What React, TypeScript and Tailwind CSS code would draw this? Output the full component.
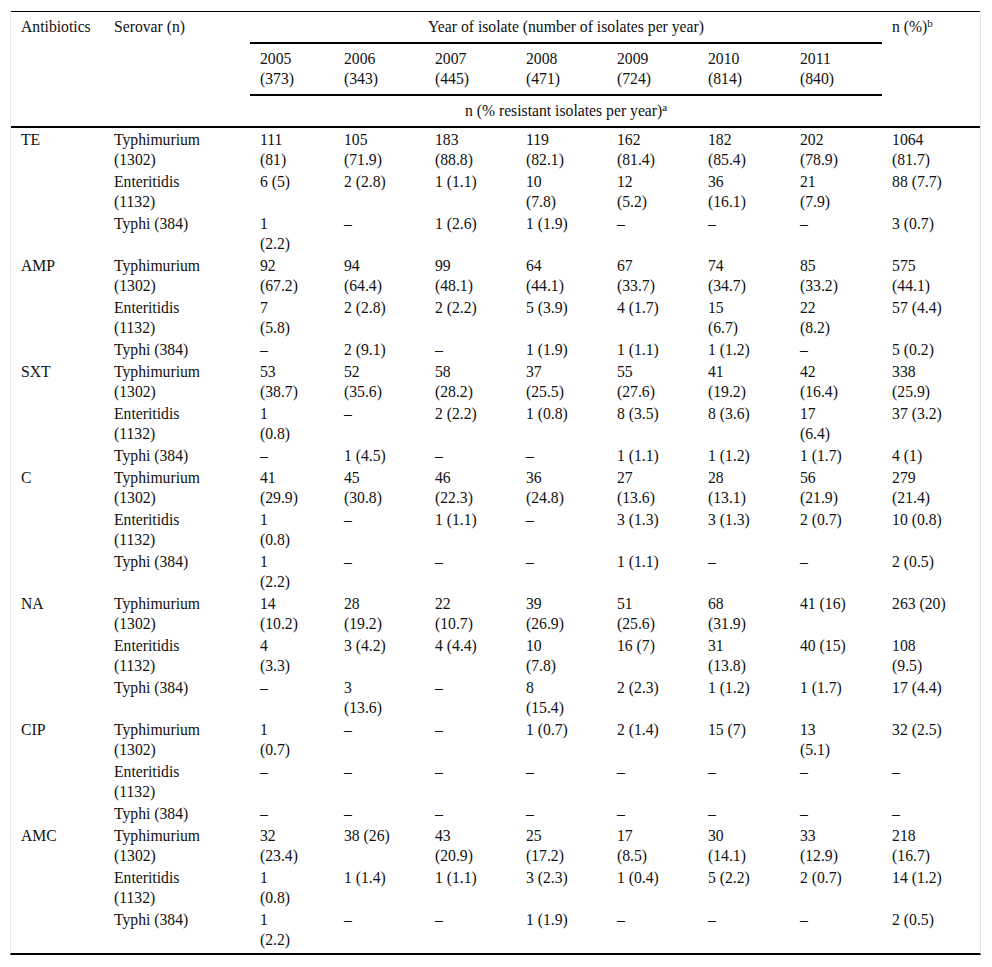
import React from "react";

type Row = { ab?: string; serovar: string; vals: string[] };

const D = "–";

const groups: { ab: string; rows: { serovar: string; vals: string[] }[] }[] = [
  {
    ab: "TE",
    rows: [
      { serovar: "Typhimurium|(1302)", vals: ["111|(81)", "105|(71.9)", "183|(88.8)", "119|(82.1)", "162|(81.4)", "182|(85.4)", "202|(78.9)", "1064|(81.7)"] },
      { serovar: "Enteritidis|(1132)", vals: ["6 (5)", "2 (2.8)", "1 (1.1)", "10|(7.8)", "12|(5.2)", "36|(16.1)", "21|(7.9)", "88 (7.7)"] },
      { serovar: "Typhi (384)", vals: ["1|(2.2)", D, "1 (2.6)", "1 (1.9)", D, D, D, "3 (0.7)"] },
    ],
  },
  {
    ab: "AMP",
    rows: [
      { serovar: "Typhimurium|(1302)", vals: ["92|(67.2)", "94|(64.4)", "99|(48.1)", "64|(44.1)", "67|(33.7)", "74|(34.7)", "85|(33.2)", "575|(44.1)"] },
      { serovar: "Enteritidis|(1132)", vals: ["7|(5.8)", "2 (2.8)", "2 (2.2)", "5 (3.9)", "4 (1.7)", "15|(6.7)", "22|(8.2)", "57 (4.4)"] },
      { serovar: "Typhi (384)", vals: [D, "2 (9.1)", D, "1 (1.9)", "1 (1.1)", "1 (1.2)", D, "5 (0.2)"] },
    ],
  },
  {
    ab: "SXT",
    rows: [
      { serovar: "Typhimurium|(1302)", vals: ["53|(38.7)", "52|(35.6)", "58|(28.2)", "37|(25.5)", "55|(27.6)", "41|(19.2)", "42|(16.4)", "338|(25.9)"] },
      { serovar: "Enteritidis|(1132)", vals: ["1|(0.8)", D, "2 (2.2)", "1 (0.8)", "8 (3.5)", "8 (3.6)", "17|(6.4)", "37 (3.2)"] },
      { serovar: "Typhi (384)", vals: [D, "1 (4.5)", D, D, "1 (1.1)", "1 (1.2)", "1 (1.7)", "4 (1)"] },
    ],
  },
  {
    ab: "C",
    rows: [
      { serovar: "Typhimurium|(1302)", vals: ["41|(29.9)", "45|(30.8)", "46|(22.3)", "36|(24.8)", "27|(13.6)", "28|(13.1)", "56|(21.9)", "279|(21.4)"] },
      { serovar: "Enteritidis|(1132)", vals: ["1|(0.8)", D, "1 (1.1)", D, "3 (1.3)", "3 (1.3)", "2 (0.7)", "10 (0.8)"] },
      { serovar: "Typhi (384)", vals: ["1|(2.2)", D, D, D, "1 (1.1)", D, D, "2 (0.5)"] },
    ],
  },
  {
    ab: "NA",
    rows: [
      { serovar: "Typhimurium|(1302)", vals: ["14|(10.2)", "28|(19.2)", "22|(10.7)", "39|(26.9)", "51|(25.6)", "68|(31.9)", "41 (16)", "263 (20)"] },
      { serovar: "Enteritidis|(1132)", vals: ["4|(3.3)", "3 (4.2)", "4 (4.4)", "10|(7.8)", "16 (7)", "31|(13.8)", "40 (15)", "108|(9.5)"] },
      { serovar: "Typhi (384)", vals: [D, "3|(13.6)", D, "8|(15.4)", "2 (2.3)", "1 (1.2)", "1 (1.7)", "17 (4.4)"] },
    ],
  },
  {
    ab: "CIP",
    rows: [
      { serovar: "Typhimurium|(1302)", vals: ["1|(0.7)", D, D, "1 (0.7)", "2 (1.4)", "15 (7)", "13|(5.1)", "32 (2.5)"] },
      { serovar: "Enteritidis|(1132)", vals: [D, D, D, D, D, D, D, D] },
      { serovar: "Typhi (384)", vals: [D, D, D, D, D, D, D, D] },
    ],
  },
  {
    ab: "AMC",
    rows: [
      { serovar: "Typhimurium|(1302)", vals: ["32|(23.4)", "38 (26)", "43|(20.9)", "25|(17.2)", "17|(8.5)", "30|(14.1)", "33|(12.9)", "218|(16.7)"] },
      { serovar: "Enteritidis|(1132)", vals: ["1|(0.8)", "1 (1.4)", "1 (1.1)", "3 (2.3)", "1 (0.4)", "5 (2.2)", "2 (0.7)", "14 (1.2)"] },
      { serovar: "Typhi (384)", vals: ["1|(2.2)", D, D, "1 (1.9)", D, D, D, "2 (0.5)"] },
    ],
  },
];

function Cell({ text }: { text: string }) {
  const parts = text.split("|");
  return (
    <>
      {parts.map((p, i) => (
        <React.Fragment key={i}>
          {i > 0 && <br />}
          {p}
        </React.Fragment>
      ))}
    </>
  );
}

const years = [
  ["2005", "(373)"],
  ["2006", "(343)"],
  ["2007", "(445)"],
  ["2008", "(471)"],
  ["2009", "(724)"],
  ["2010", "(814)"],
  ["2011", "(840)"],
];

export default function App() {
  const rows: Row[] = [];
  groups.forEach((g) => g.rows.forEach((r, i) => rows.push({ ab: i === 0 ? g.ab : undefined, ...r })));
  return (
    <div className="bg-white min-h-screen pt-[11px] pl-[10px] font-['Liberation_Serif'] text-[15.7px] leading-[20px] text-[#111]">
      <div className="w-[971px] border-l border-r border-[#e6e6e6] pb-[3px] border-b-[2px] border-b-black">
        <table className="w-[969px] table-fixed border-separate border-spacing-0 text-left border-t border-black">
          <colgroup>
            <col className="w-[93px]" />
            <col className="w-[146px]" />
            <col className="w-[84px]" />
            <col className="w-[91px]" />
            <col className="w-[91px]" />
            <col className="w-[91px]" />
            <col className="w-[91px]" />
            <col className="w-[92px]" />
            <col className="w-[92px]" />
            <col className="w-[98px]" />
          </colgroup>
          <thead>
            <tr>
              <th rowSpan={3} className="align-top font-normal pl-[10px] pt-[5px] pb-[5px] border-b-[2px] border-black">Antibiotics</th>
              <th rowSpan={3} className="align-top font-normal pl-[10px] pt-[5px] pb-[5px] border-b-[2px] border-black">Serovar (n)</th>
              <th colSpan={7} className="font-normal text-center pt-[5px] pb-[5px] border-b-[2px] border-black">
                Year of isolate (number of isolates per year)
              </th>
              <th rowSpan={3} className="align-top font-normal pl-[10px] pt-[5px] pb-[5px] border-b-[2px] border-black whitespace-nowrap">
                n (%)<sup className="text-[11px] leading-none">b</sup>
              </th>
            </tr>
            <tr>
              {years.map(([y, n]) => (
                <th key={y} className="font-normal pl-[10px] pt-[5px] pb-[5px] border-b-[2px] border-black">
                  {y}
                  <br />
                  {n}
                </th>
              ))}
            </tr>
            <tr>
              <th colSpan={7} className="font-normal text-center pt-[5px] pb-[5px] border-b-[2px] border-black">
                n (% resistant isolates per year)<sup className="text-[11px] leading-none">a</sup>
              </th>
            </tr>
          </thead>
          <tbody>
            {rows.map((r, i) => (
              <tr key={i}>
                <td className="align-top pl-[10px] pt-[2px]">{r.ab ?? ""}</td>
                <td className="align-top pl-[10px] pt-[2px] whitespace-nowrap">
                  <Cell text={r.serovar} />
                </td>
                {r.vals.map((v, j) => (
                  <td key={j} className="align-top pl-[10px] pt-[2px] whitespace-nowrap">
                    <Cell text={v} />
                  </td>
                ))}
              </tr>
            ))}
          </tbody>
        </table>
      </div>
    </div>
  );
}
